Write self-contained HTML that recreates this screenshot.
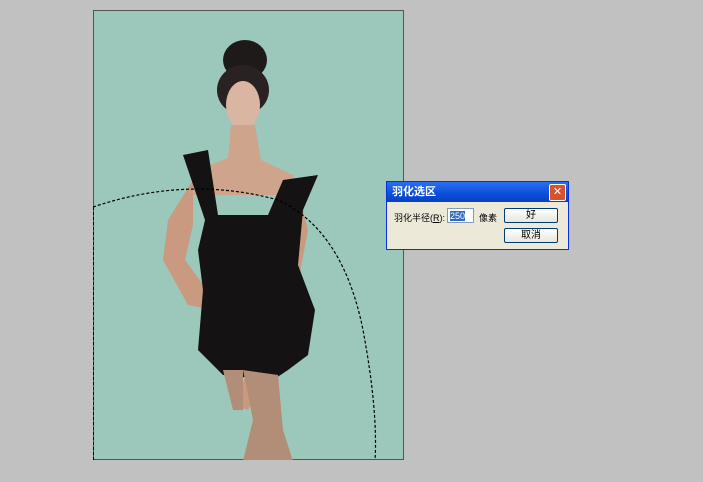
<!DOCTYPE html>
<html><head><style>
body{margin:0;width:703px;height:482px;background:#c1c1c1;position:relative;overflow:hidden;font-family:"Liberation Sans","Noto Sans CJK SC",sans-serif}
#cv{position:absolute;left:93px;top:10px;width:311px;height:450px;background:#9cc8bc;border:1px solid #555;box-sizing:border-box}
#dlg{position:absolute;left:386px;top:181px;width:183px;height:69px;background:#ece9d8;border:1px solid #0831d9;box-sizing:border-box}
#tb{height:20px;background:linear-gradient(#2c6ef0,#0a4fd9 60%,#0840c0);color:#fff;font-size:11px;font-weight:bold;line-height:20px;padding-left:5px}
#x{position:absolute;right:2px;top:2px;width:15px;height:15px;background:#d9522e;border:1px solid #fff;border-radius:2px;color:#fff;font-size:11px;text-align:center;line-height:14px}
.l{position:absolute;font-size:9px;color:#000;white-space:nowrap}
.b{position:absolute;width:52px;height:13px;border:1px solid #003c74;border-radius:2px;background:linear-gradient(#fff,#e6e6dc);font-size:10px;text-align:center;line-height:13px}
</style></head><body>
<div id="cv">
<svg width="311" height="450" style="position:absolute;left:-1px;top:-1px">
<ellipse cx="152" cy="50" rx="22" ry="20" fill="#1e1a1a"/>
<ellipse cx="150" cy="80" rx="26" ry="25" fill="#2a2222"/>
<ellipse cx="150" cy="95" rx="17" ry="24" fill="#d9b5a2"/>
<path d="M138 115 L162 115 L168 150 L200 165 L205 185 L100 185 L105 160 L135 148Z" fill="#cfa48c"/>
<path d="M100 170 L75 210 L70 250 L95 295 L120 300 L118 285 L92 250 L100 215Z" fill="#c99a80"/>
<path d="M205 180 L195 230 L180 300 L160 350 L140 395 L155 400 L180 350 L200 300 L215 220Z" fill="#c99a80"/>
<path d="M90 145 L115 140 L125 205 L175 205 L190 170 L225 165 L210 200 L205 255 L222 300 L215 345 L195 360 L180 370 L130 365 L105 340 L110 280 L105 240 L112 210Z" fill="#141212"/>
<path d="M150 360 L185 365 L190 420 L200 451 L150 451 L160 410Z" fill="#b28d78"/>
<path d="M130 360 L150 360 L150 400 L140 400Z" fill="#b28d78"/>
<path d="M0 197 Q95 165 185 190 Q250 220 270 320 Q285 400 282 451" fill="none" stroke="#000" stroke-width="1.2" stroke-dasharray="3 2"/>
<path d="M0 451 L282 451" stroke="#000" stroke-dasharray="3 2"/>
<path d="M0 197 L0 451" stroke="#000" stroke-dasharray="3 2" stroke-width="2"/>
</svg>
</div>
<div id="dlg">
<div id="tb">羽化选区</div><div id="x">✕</div>
<div class="l" style="left:7px;top:29px">羽化半径(<u>R</u>):</div>
<div style="position:absolute;left:60px;top:26px;width:27px;height:15px;background:#fff;border:1px solid #7f9db9;box-sizing:border-box;line-height:12px"><span style="background:#316ac5;color:#fff;font-size:9px;margin-left:2px">250</span></div>
<div class="l" style="left:92px;top:29px">像素</div>
<div class="b" style="left:117px;top:26px">好</div>
<div class="b" style="left:117px;top:46px">取消</div>
</div>
</body></html>
